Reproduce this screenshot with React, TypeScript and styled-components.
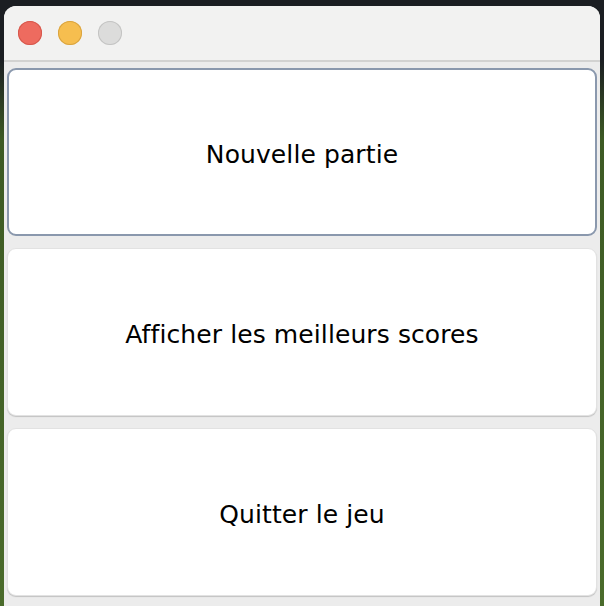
import styled, { createGlobalStyle } from 'styled-components';

const GlobalStyle = createGlobalStyle`
    html, body {
        margin: 0;
        padding: 0;
        height: 100%;
        overflow: hidden;
    }
    body {
        background: linear-gradient(180deg, #1b1e22 0px, #1b1e22 60px, #3d5a24 140px, #4a6b2b 100%);
        font-family: "DejaVu Sans", "Liberation Sans", sans-serif;
    }
`;

const Window = styled.div`
    margin: 6px 0 0 4px;
    width: 596px;
    height: 600px;
    border-radius: 12px 12px 0 0;
    background: #ececec;
    overflow: hidden;
    display: flex;
    flex-direction: column;
`;

const TitleBar = styled.div`
    height: 56px;
    flex-shrink: 0;
    background: #f2f2f1;
    border-bottom: 2px solid #d2d2d1;
    display: flex;
    align-items: center;
    gap: 16px;
    padding: 0 0 0 14px;
    box-sizing: border-box;
`;

const Light = styled.span<{ $fill: string; $edge: string }>`
    width: 24px;
    height: 24px;
    border-radius: 50%;
    background: ${(p) => p.$fill};
    box-shadow: inset 0 0 0 1px ${(p) => p.$edge};
`;

const Menu = styled.div`
    flex: 1;
    display: flex;
    flex-direction: column;
    gap: 12px;
    padding: 6px 3px 0 3px;
`;

const MenuButton = styled.button<{ $focused?: boolean }>`
    height: 168px;
    flex-shrink: 0;
    box-sizing: border-box;
    background: #ffffff;
    border-radius: 9px;
    border: ${(p) => (p.$focused ? '2px solid #8a98ad' : '1px solid #e2e2e2')};
    box-shadow: ${(p) => (p.$focused ? 'none' : '0 1px 1px rgba(0,0,0,0.18)')};
    font-family: "DejaVu Sans", "Liberation Sans", sans-serif;
    font-size: 25px;
    letter-spacing: 0.1px;
    color: #000;
    display: flex;
    align-items: center;
    justify-content: center;
    padding: 4px 0 0 0;
    outline: none;
`;

export default function App() {
    return (
        <>
            <GlobalStyle />
            <Window>
                <TitleBar>
                    <Light $fill="#ee6b5f" $edge="#d6584d" />
                    <Light $fill="#f6be4f" $edge="#d9a440" />
                    <Light $fill="#dcdcdb" $edge="#c4c4c3" />
                </TitleBar>
                <Menu>
                    <MenuButton $focused>Nouvelle partie</MenuButton>
                    <MenuButton>Afficher les meilleurs scores</MenuButton>
                    <MenuButton>Quitter le jeu</MenuButton>
                </Menu>
            </Window>
        </>
    );
}
